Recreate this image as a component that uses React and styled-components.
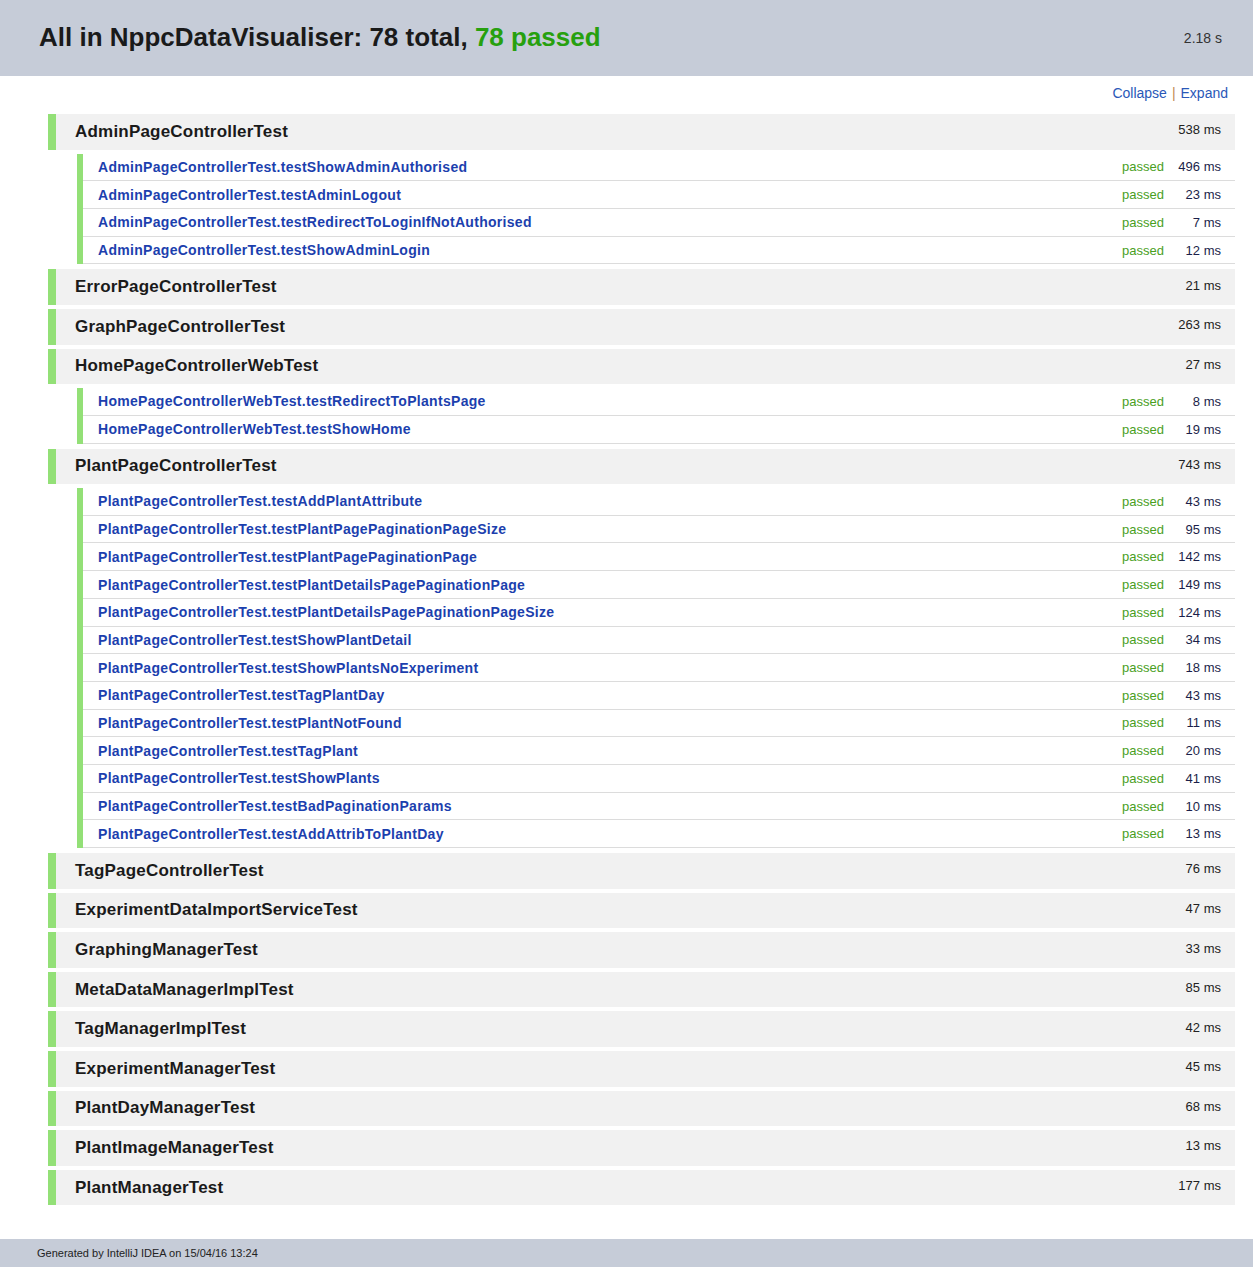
import React from "react";
import styled, { createGlobalStyle } from "styled-components";

const GlobalStyle = createGlobalStyle`
  html, body {
    margin: 0;
    padding: 0;
    background: #fff;
  }
  body {
    font-family: "Liberation Sans", Arial, sans-serif;
    color: #1a1a1a;
  }
`;

const suites = [
  {
    name: "AdminPageControllerTest",
    time: "538 ms",
    tests: [
      ["testShowAdminAuthorised", "496 ms"],
      ["testAdminLogout", "23 ms"],
      ["testRedirectToLoginIfNotAuthorised", "7 ms"],
      ["testShowAdminLogin", "12 ms"],
    ],
  },
  { name: "ErrorPageControllerTest", time: "21 ms" },
  { name: "GraphPageControllerTest", time: "263 ms" },
  {
    name: "HomePageControllerWebTest",
    time: "27 ms",
    tests: [
      ["testRedirectToPlantsPage", "8 ms"],
      ["testShowHome", "19 ms"],
    ],
  },
  {
    name: "PlantPageControllerTest",
    time: "743 ms",
    tests: [
      ["testAddPlantAttribute", "43 ms"],
      ["testPlantPagePaginationPageSize", "95 ms"],
      ["testPlantPagePaginationPage", "142 ms"],
      ["testPlantDetailsPagePaginationPage", "149 ms"],
      ["testPlantDetailsPagePaginationPageSize", "124 ms"],
      ["testShowPlantDetail", "34 ms"],
      ["testShowPlantsNoExperiment", "18 ms"],
      ["testTagPlantDay", "43 ms"],
      ["testPlantNotFound", "11 ms"],
      ["testTagPlant", "20 ms"],
      ["testShowPlants", "41 ms"],
      ["testBadPaginationParams", "10 ms"],
      ["testAddAttribToPlantDay", "13 ms"],
    ],
  },
  { name: "TagPageControllerTest", time: "76 ms" },
  { name: "ExperimentDataImportServiceTest", time: "47 ms" },
  { name: "GraphingManagerTest", time: "33 ms" },
  { name: "MetaDataManagerImplTest", time: "85 ms" },
  { name: "TagManagerImplTest", time: "42 ms" },
  { name: "ExperimentManagerTest", time: "45 ms" },
  { name: "PlantDayManagerTest", time: "68 ms" },
  { name: "PlantImageManagerTest", time: "13 ms" },
  { name: "PlantManagerTest", time: "177 ms" },
];

const Header = styled.header`
  height: 76px;
  background: #c6ccd8;
  display: flex;
  align-items: center;
  justify-content: space-between;
  padding: 0 31px 0 39px;
`;

const Title = styled.h1`
  margin: 0 0 2px;
  font-size: 26px;
  font-weight: bold;
  color: #1a1a1a;
`;

const Passed = styled.span`
  color: #27a00e;
`;

const TotalTime = styled.span`
  font-size: 14px;
  color: #333;
`;

const Main = styled.main`
  padding: 8px 18px 0 48px;
`;

const Toolbar = styled.div`
  display: flex;
  justify-content: flex-end;
  padding-right: 7px;
  font-size: 14px;
  line-height: 18px;
  margin-bottom: 12px;
`;

const ToolLink = styled.a`
  color: #2a58b8;
  text-decoration: none;
  cursor: pointer;
`;

const Sep = styled.span`
  color: #c08a50;
  margin: 0 5px;
`;

const SuiteRow = styled.div`
  height: 35.6px;
  margin-bottom: 4px;
  background: #f1f1f1;
  border-left: 8px solid #93e077;
  display: flex;
  align-items: center;
  justify-content: space-between;
  padding: 0 14px 0 19px;
`;

const SuiteName = styled.span`
  font-size: 17px;
  font-weight: bold;
  color: #1a1a1a;
  letter-spacing: 0.2px;
`;

const SuiteTime = styled.span`
  font-size: 13px;
  color: #222;
  margin-top: -4px;
`;

const TestGroup = styled.div`
  margin: 1.5px 0 5px 29px;
  border-left: 6px solid #93e077;
`;

const TestRow = styled.div`
  height: 26.7px;
  border-bottom: 1px solid #dcdcdc;
  display: flex;
  align-items: center;
  padding: 0 14px 0 15px;
  font-size: 13px;
`;

const TestName = styled.a`
  flex: 1;
  font-size: 14px;
  font-weight: bold;
  color: #1c3fae;
  text-decoration: none;
  letter-spacing: 0.3px;
`;

const Status = styled.span`
  color: #4aa01e;
`;

const TestTime = styled.span`
  width: 57px;
  text-align: right;
  color: #1b1f4a;
`;

const Footer = styled.footer`
  margin-top: 34px;
  margin-bottom: 14px;
  height: 28px;
  background: #c6ccd8;
  display: flex;
  align-items: center;
  padding-left: 37px;
  font-size: 11px;
  color: #222;
`;

export default function App() {
  return (
    <>
      <GlobalStyle />
      <Header>
        <Title>
          All in NppcDataVisualiser: 78 total, <Passed>78 passed</Passed>
        </Title>
        <TotalTime>2.18 s</TotalTime>
      </Header>
      <Main>
        <Toolbar>
          <ToolLink>Collapse</ToolLink>
          <Sep>|</Sep>
          <ToolLink>Expand</ToolLink>
        </Toolbar>
        {suites.map((suite) => (
          <React.Fragment key={suite.name}>
            <SuiteRow>
              <SuiteName>{suite.name}</SuiteName>
              <SuiteTime>{suite.time}</SuiteTime>
            </SuiteRow>
            {suite.tests && (
              <TestGroup>
                {suite.tests.map(([test, time]) => (
                  <TestRow key={test}>
                    <TestName>
                      {suite.name}.{test}
                    </TestName>
                    <Status>passed</Status>
                    <TestTime>{time}</TestTime>
                  </TestRow>
                ))}
              </TestGroup>
            )}
          </React.Fragment>
        ))}
      </Main>
      <Footer>Generated by IntelliJ IDEA on 15/04/16 13:24</Footer>
    </>
  );
}
